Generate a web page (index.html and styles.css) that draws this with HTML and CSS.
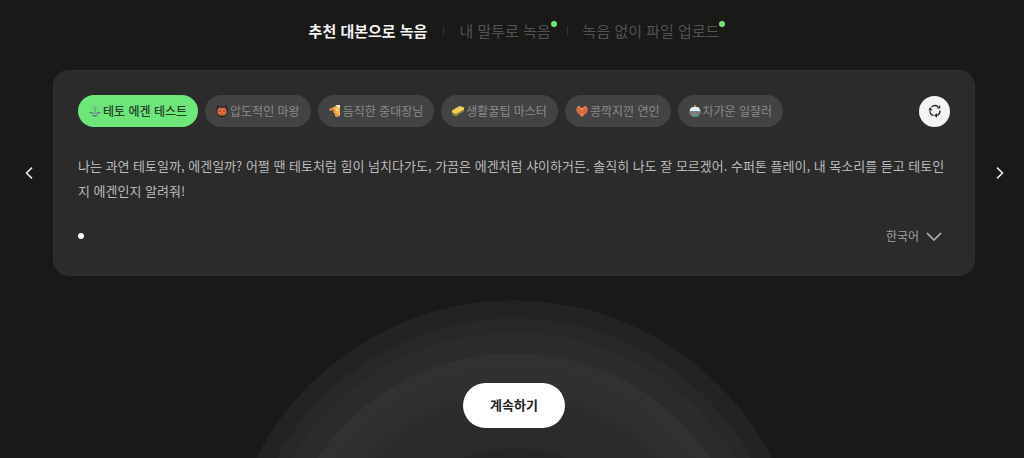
FILE: index.html
```html
<!DOCTYPE html>
<html lang="ko">
<head>
  <meta charset="UTF-8" />
  <meta name="viewport" content="width=device-width, initial-scale=1.0" />
  <title>녹음</title>
  <link rel="stylesheet" href="styles.css">
</head>
<body>

  <nav class="tabs">
    <a class="tab active" href="#script">추천 대본으로 녹음</a>
    <a class="tab" href="#free">내 말투로 녹음<span class="new-dot"></span></a>
    <a class="tab" href="#upload">녹음 없이 파일 업로드<span class="new-dot"></span></a>
  </nav>

  <main class="recorder">
    <button class="arrow" type="button" aria-label="이전">
      <svg viewBox="0 0 8 12"><path d="M7 .7 1.500 6 7 11.300"/></svg>
    </button>

    <section class="card">
      <div class="card-top">
        <div class="chips">
          <button class="chip active" type="button">
            <svg viewBox="0 0 12 12">
              <path d="M3 1.500h1M5.500.5h1M8 1.500h1M2 4h1M4 3h1M7 3h1M9 4h1" stroke="#a58fa8" fill="none"/>
              <path d="M6 2v7M0 7.500h4M8 7.500h4M3 10.500h6" stroke="#5f8a78" fill="none"/>
              <path d="M2 8.500h3M7 8.500h3M5 11.500h2" stroke="#8d78b0" fill="none"/>
            </svg>테토 에겐 테스트</button>
          <button class="chip" type="button">
            <svg viewBox="0 0 12 12">
              <path d="M1.500 0 3.500 1.500h5L10.500 0l1 5-.5 4-2.500 3h-5L1 9 .5 5z" fill="#26201f"/>
              <path d="M3 2.500h2l1 1 1-1h2L10.500 5v3L8.500 10.500h-5L1.500 8V5z" fill="#dd7042"/>
              <path d="M4 5v2M8 5v2" stroke="#7c3a22"/>
              <path d="M4.500 9h3" stroke="#b9502e"/>
            </svg>압도적인 마왕</button>
          <button class="chip" type="button">
            <svg viewBox="0 0 12 12">
              <path d="M0 4 5 2l3-2 3 2v9l-4 1-2-4-1-3-3 1z" fill="#efb94b"/>
              <path d="M7 0h4v3L8 2z" fill="#f4ead9"/>
              <path d="M0 4.500l4-1 2 3M6 8l3 3" stroke="#d65431" fill="none"/>
              <path d="M7 4h2v2H7z" fill="#ffe08a"/>
            </svg>듬직한 중대장님</button>
          <button class="chip" type="button">
            <svg viewBox="0 0 12 12">
              <path d="M0 6 8 1l4 2v3l-8 5.500-4-2z" fill="#5d9b45"/>
              <path d="M1 8l3 1.500L11.500 5" stroke="#d9532e" fill="none"/>
              <path d="M0 5.500 7.500 1 12 2.500v2L4 9 0 7z" fill="#f1cf4f"/>
            </svg>생활꿀팁 마스터</button>
          <button class="chip" type="button">
            <svg viewBox="0 0 12 12">
              <path d="M6 12 1 7.500C-1 4 1 1 3.500 1L6 3l2.500-2C11 1 13 4 11 7.500z" fill="#dc6e43"/>
              <path d="M2 2h1M9 2h1M5 4h2M5.500 10h1" stroke="#f6c55a"/>
              <path d="M3 7h1M8 7h1" stroke="#b94c30"/>
            </svg>콩깍지낀 연인</button>
          <button class="chip" type="button">
            <svg viewBox="0 0 12 12">
              <path d="M1 4 3 2h6l2 2v3H1z" fill="#e9edee"/>
              <circle cx="6" cy="1" r="1" fill="#d8a347"/>
              <path d="M1 6h10l-1 5H2z" fill="#6b8b94"/>
              <path d="M0 5v4M12 5v4" stroke="#93a4aa"/>
              <path d="M3 7h2v2H3zM7 7h2v2H7z" fill="#a76a60"/>
              <path d="M3 11.500h6" stroke="#3f8755"/>
            </svg>차가운 일잘러</button>
        </div>
        <button class="shuffle" type="button" aria-label="대본 바꾸기">
          <svg viewBox="0 0 14 14">
            <path d="M3.500 3a5 5 0 0 1 6.500-.3M12 6.500a5 5 0 0 1-3 5M5.500 11.700A5 5 0 0 1 2 6.500"/>
            <path class="head" d="M8.500 4.500h3.700V1zM9 9.300v4.400L6 11.500zM.5 6.200h4L2 3z"/>
          </svg>
        </button>
      </div>

      <p class="script">나는 과연 테토일까, 에겐일까? 어쩔 땐 테토처럼 힘이 넘치다가도, 가끔은 에겐처럼 샤이하거든. 솔직히 나도 잘 모르겠어. 수퍼톤 플레이, 내 목소리를 듣고 테토인지 에겐인지 알려줘!</p>

      <div class="card-bottom">
        <span class="page-dot"></span>
        <div class="language">
          <select aria-label="언어">
            <option>한국어</option>
          </select>
          <svg viewBox="0 0 16 9"><path d="M1 1l7 7 7-7"/></svg>
        </div>
      </div>
    </section>

    <button class="arrow" type="button" aria-label="다음">
      <svg viewBox="0 0 8 12"><path d="M1 .7 6.500 6 1 11.300"/></svg>
    </button>
  </main>

  <button class="continue" type="button">계속하기</button>

</body>
</html>
```

FILE: styles.css
```css
* {
  box-sizing: border-box;
}

html {
  min-height: 100%;
  background: #191918;
}

body {
  margin: 0;
  padding-left: 4px;
  min-height: 100vh;
  display: flex;
  flex-direction: column;
  align-items: center;
  font-family: "Noto Sans CJK KR", sans-serif;
  /* rings of light behind the button */
  background: radial-gradient(circle at calc(50% + 2px) 590px,
    #252525 141px, #2a2a2a 142px, #2b2b2b 190px,
    #303030 204px, #313131 236px, #2b2b2b 237px,
    #2b2b2b 257px, #282828 258px, #282828 271px,
    #232321 272px, #232321 289px, #191919 290px,
    #191919 330px, #191918 331px);
}

button,
select {
  font-family: inherit;
  border: none;
  cursor: pointer;
}

svg {
  flex: none;
  fill: none;
}

.tabs {
  display: flex;
  align-items: center;
  padding-top: 20px;
  margin-bottom: 28px;
}

.tab {
  position: relative;
  padding: 0 16px;
  font-size: 15px;
  line-height: 22px;
  color: #535352;
  text-decoration: none;
}

.tab.active {
  color: #f4f4f4;
  font-weight: 700;
}

.tab + .tab::before {
  content: "";
  position: absolute;
  left: 0;
  top: 6px;
  width: 1px;
  height: 10px;
  background: #333332;
}

.new-dot {
  position: absolute;
  top: 1px;
  right: 10px;
  width: 6px;
  height: 6px;
  border-radius: 50%;
  background: #6ee77a;
}

.recorder {
  width: 100%;
  display: grid;
  grid-template-columns: 49px 1fr 49px;
}

.arrow {
  display: flex;
  align-items: center;
  justify-content: center;
  padding: 0;
  background: none;
}

.arrow svg {
  width: 8px;
  height: 12px;
  stroke: #e6e6e6;
  stroke-width: 1.6;
}

.card {
  display: flex;
  flex-direction: column;
  gap: 24px;
  padding: 24px 24px 30px;
  border: 1px solid #303030;
  border-radius: 16px;
  background: #2b2b2b;
}

.card-top,
.card-bottom {
  display: flex;
  align-items: center;
  justify-content: space-between;
}

.card-top {
  margin-bottom: 2px;
}

.chips {
  display: flex;
  gap: 7px;
}

.chip {
  display: flex;
  align-items: center;
  gap: 2px;
  height: 32px;
  padding: 0 11px 1px;
  border-radius: 16px;
  background: #434343;
  color: #8b8a87;
  font-size: 12px;
  white-space: nowrap;
}

.chip svg {
  width: 12px;
  height: 12px;
}

.chip.active {
  background: #6ee77a;
  color: #253f2a;
  font-weight: 500;
}

.shuffle {
  display: flex;
  align-items: center;
  justify-content: center;
  width: 31px;
  height: 31px;
  padding: 0;
  border-radius: 50%;
  background: #f4f4f4;
}

.shuffle svg {
  width: 14px;
  height: 14px;
  stroke: #2b2b2b;
  stroke-width: 1.3;
}

.shuffle .head {
  fill: #2b2b2b;
  stroke: none;
}

.script {
  margin: 0;
  color: #bababa;
  font-size: 13px;
  line-height: 25px;
}

.card-bottom {
  padding-right: 8px;
}

.page-dot {
  width: 6px;
  height: 6px;
  border-radius: 50%;
  background: #f4f4f4;
}

.language {
  display: grid;
  align-items: center;
}

.language select,
.language svg {
  grid-area: 1 / 1;
}

.language select {
  appearance: none;
  padding: 0 22px 0 0;
  background: none;
  color: #a3a3a3;
  font-size: 12px;
  line-height: 18px;
}

.language svg {
  justify-self: end;
  width: 16px;
  height: 9px;
  stroke: #b4b4b4;
  stroke-width: 1.6;
  pointer-events: none;
}

.continue {
  margin-top: 107px;
  padding: 0 27px 2px;
  height: 45px;
  border-radius: 23px;
  background: #fff;
  color: #222;
  font-size: 13px;
  font-weight: 700;
}
```
